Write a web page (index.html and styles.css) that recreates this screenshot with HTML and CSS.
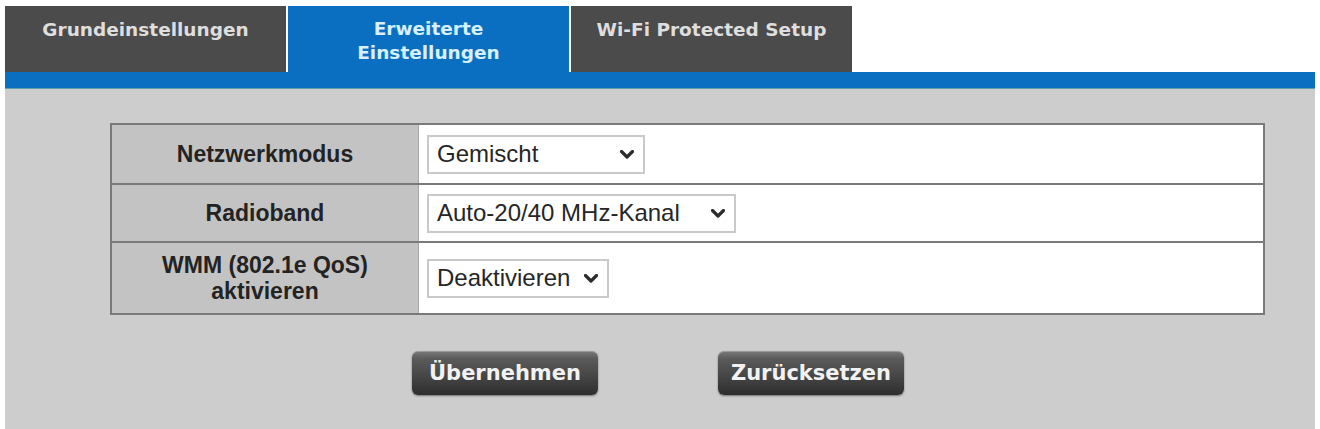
FILE: index.html
```html
<!DOCTYPE html>
<html lang="de">
<head>
<meta charset="utf-8">
<title>WLAN – Erweiterte Einstellungen</title>
<link rel="stylesheet" href="styles.css">
</head>
<body>
<div class="page">
  <nav class="tabs">
    <div class="tab">Grundeinstellungen</div>
    <div class="tab active">Erweiterte<br>Einstellungen</div>
    <div class="tab">Wi-Fi Protected Setup</div>
  </nav>
  <div class="bar"></div>
  <main class="panel">
    <table class="settings">
      <tr class="row-1">
        <th>Netzwerkmodus</th>
        <td><div class="select w1"><span>Gemischt</span><svg class="chev" viewBox="0 0 14 9"><path d="M1.5 1.5 L7 7 L12.5 1.5" /></svg></div></td>
      </tr>
      <tr class="row-2">
        <th>Radioband</th>
        <td><div class="select w2"><span>Auto-20/40 MHz-Kanal</span><svg class="chev" viewBox="0 0 14 9"><path d="M1.5 1.5 L7 7 L12.5 1.5" /></svg></div></td>
      </tr>
      <tr class="row-3">
        <th>WMM (802.1e QoS)<br>aktivieren</th>
        <td><div class="select w3"><span>Deaktivieren</span><svg class="chev" viewBox="0 0 14 9"><path d="M1.5 1.5 L7 7 L12.5 1.5" /></svg></div></td>
      </tr>
    </table>
    <div class="actions">
      <button class="btn">Übernehmen</button>
      <button class="btn">Zurücksetzen</button>
    </div>
  </main>
</div>
</body>
</html>
```

FILE: styles.css
```css
html, body {
  margin: 0;
  padding: 0;
  background: #ffffff;
}
body {
  width: 1320px;
  height: 429px;
  overflow: hidden;
  font-family: "Liberation Sans", Arial, sans-serif;
}
.page {
  margin-left: 5px;
  width: 1310px;
  padding-top: 6px;
}
.tabs {
  display: flex;
  gap: 2px;
  height: 66px;
}
.tab {
  width: 281px;
  background: #4b4b4b;
  color: #dedede;
  font-family: "DejaVu Sans", Verdana, sans-serif;
  font-weight: bold;
  font-size: 18.5px;
  line-height: 24px;
  text-align: center;
  padding-top: 12px;
  box-sizing: border-box;
}
.tab.active {
  background: #0b6fc1;
  color: #d6f0ff;
  padding-top: 11px;
}
.bar {
  height: 17px;
  background: #0b6fc1;
  border-bottom: 1px solid #5f9fb0;
  box-sizing: border-box;
}
.panel {
  background: #cdcdcd;
  height: 340px;
  padding-top: 34px;
  box-sizing: border-box;
}
.settings {
  margin-left: 105px;
  width: 1155px;
  border-collapse: collapse;
  border: 2px solid #7a7a7a;
}
.settings th {
  width: 306px;
  background: #c3c3c3;
  color: #232323;
  font-weight: bold;
  font-size: 23px;
  line-height: 26px;
  text-align: center;
  border-bottom: 2px solid #7a7a7a;
  border-right: 1px solid #a8a8a8;
  padding: 0;
}
.settings td {
  background: #ffffff;
  border-bottom: 2px solid #7a7a7a;
  padding: 0 0 0 8px;
}
.settings tr:last-child th,
.settings tr:last-child td {
  border-bottom: 0;
}
.row-1 { height: 60px; }
.row-2 { height: 58px; }
.row-3 { height: 72px; }
.select {
  height: 39px;
  box-sizing: border-box;
  border: 2px solid #c9c9c9;
  background: #ffffff;
  display: flex;
  align-items: center;
  justify-content: space-between;
  padding: 0 9px 0 8px;
  color: #262626;
  font-size: 24px;
}
.w1 { width: 218px; }
.w2 { width: 309px; }
.w3 { width: 182px; }
.chev {
  width: 14px;
  height: 9px;
  fill: none;
  stroke: #2d2d2d;
  stroke-width: 3.2;
  stroke-linecap: round;
  stroke-linejoin: round;
}
.actions {
  display: flex;
  justify-content: center;
  gap: 120px;
  margin-top: 36px;
  padding-right: 4px;
}
.btn {
  width: 186px;
  height: 44px;
  border: 0;
  border-radius: 6px;
  background: linear-gradient(#7a7a7a 0%, #5a5a5a 18%, #444444 60%, #2e2e2e 100%);
  box-shadow: 0 1px 2px rgba(0, 0, 0, 0.45), inset 0 1px 0 rgba(255, 255, 255, 0.25);
  color: #f2f2f2;
  font-family: "DejaVu Sans", Verdana, sans-serif;
  font-weight: bold;
  font-size: 21px;
  padding: 0;
}
```
